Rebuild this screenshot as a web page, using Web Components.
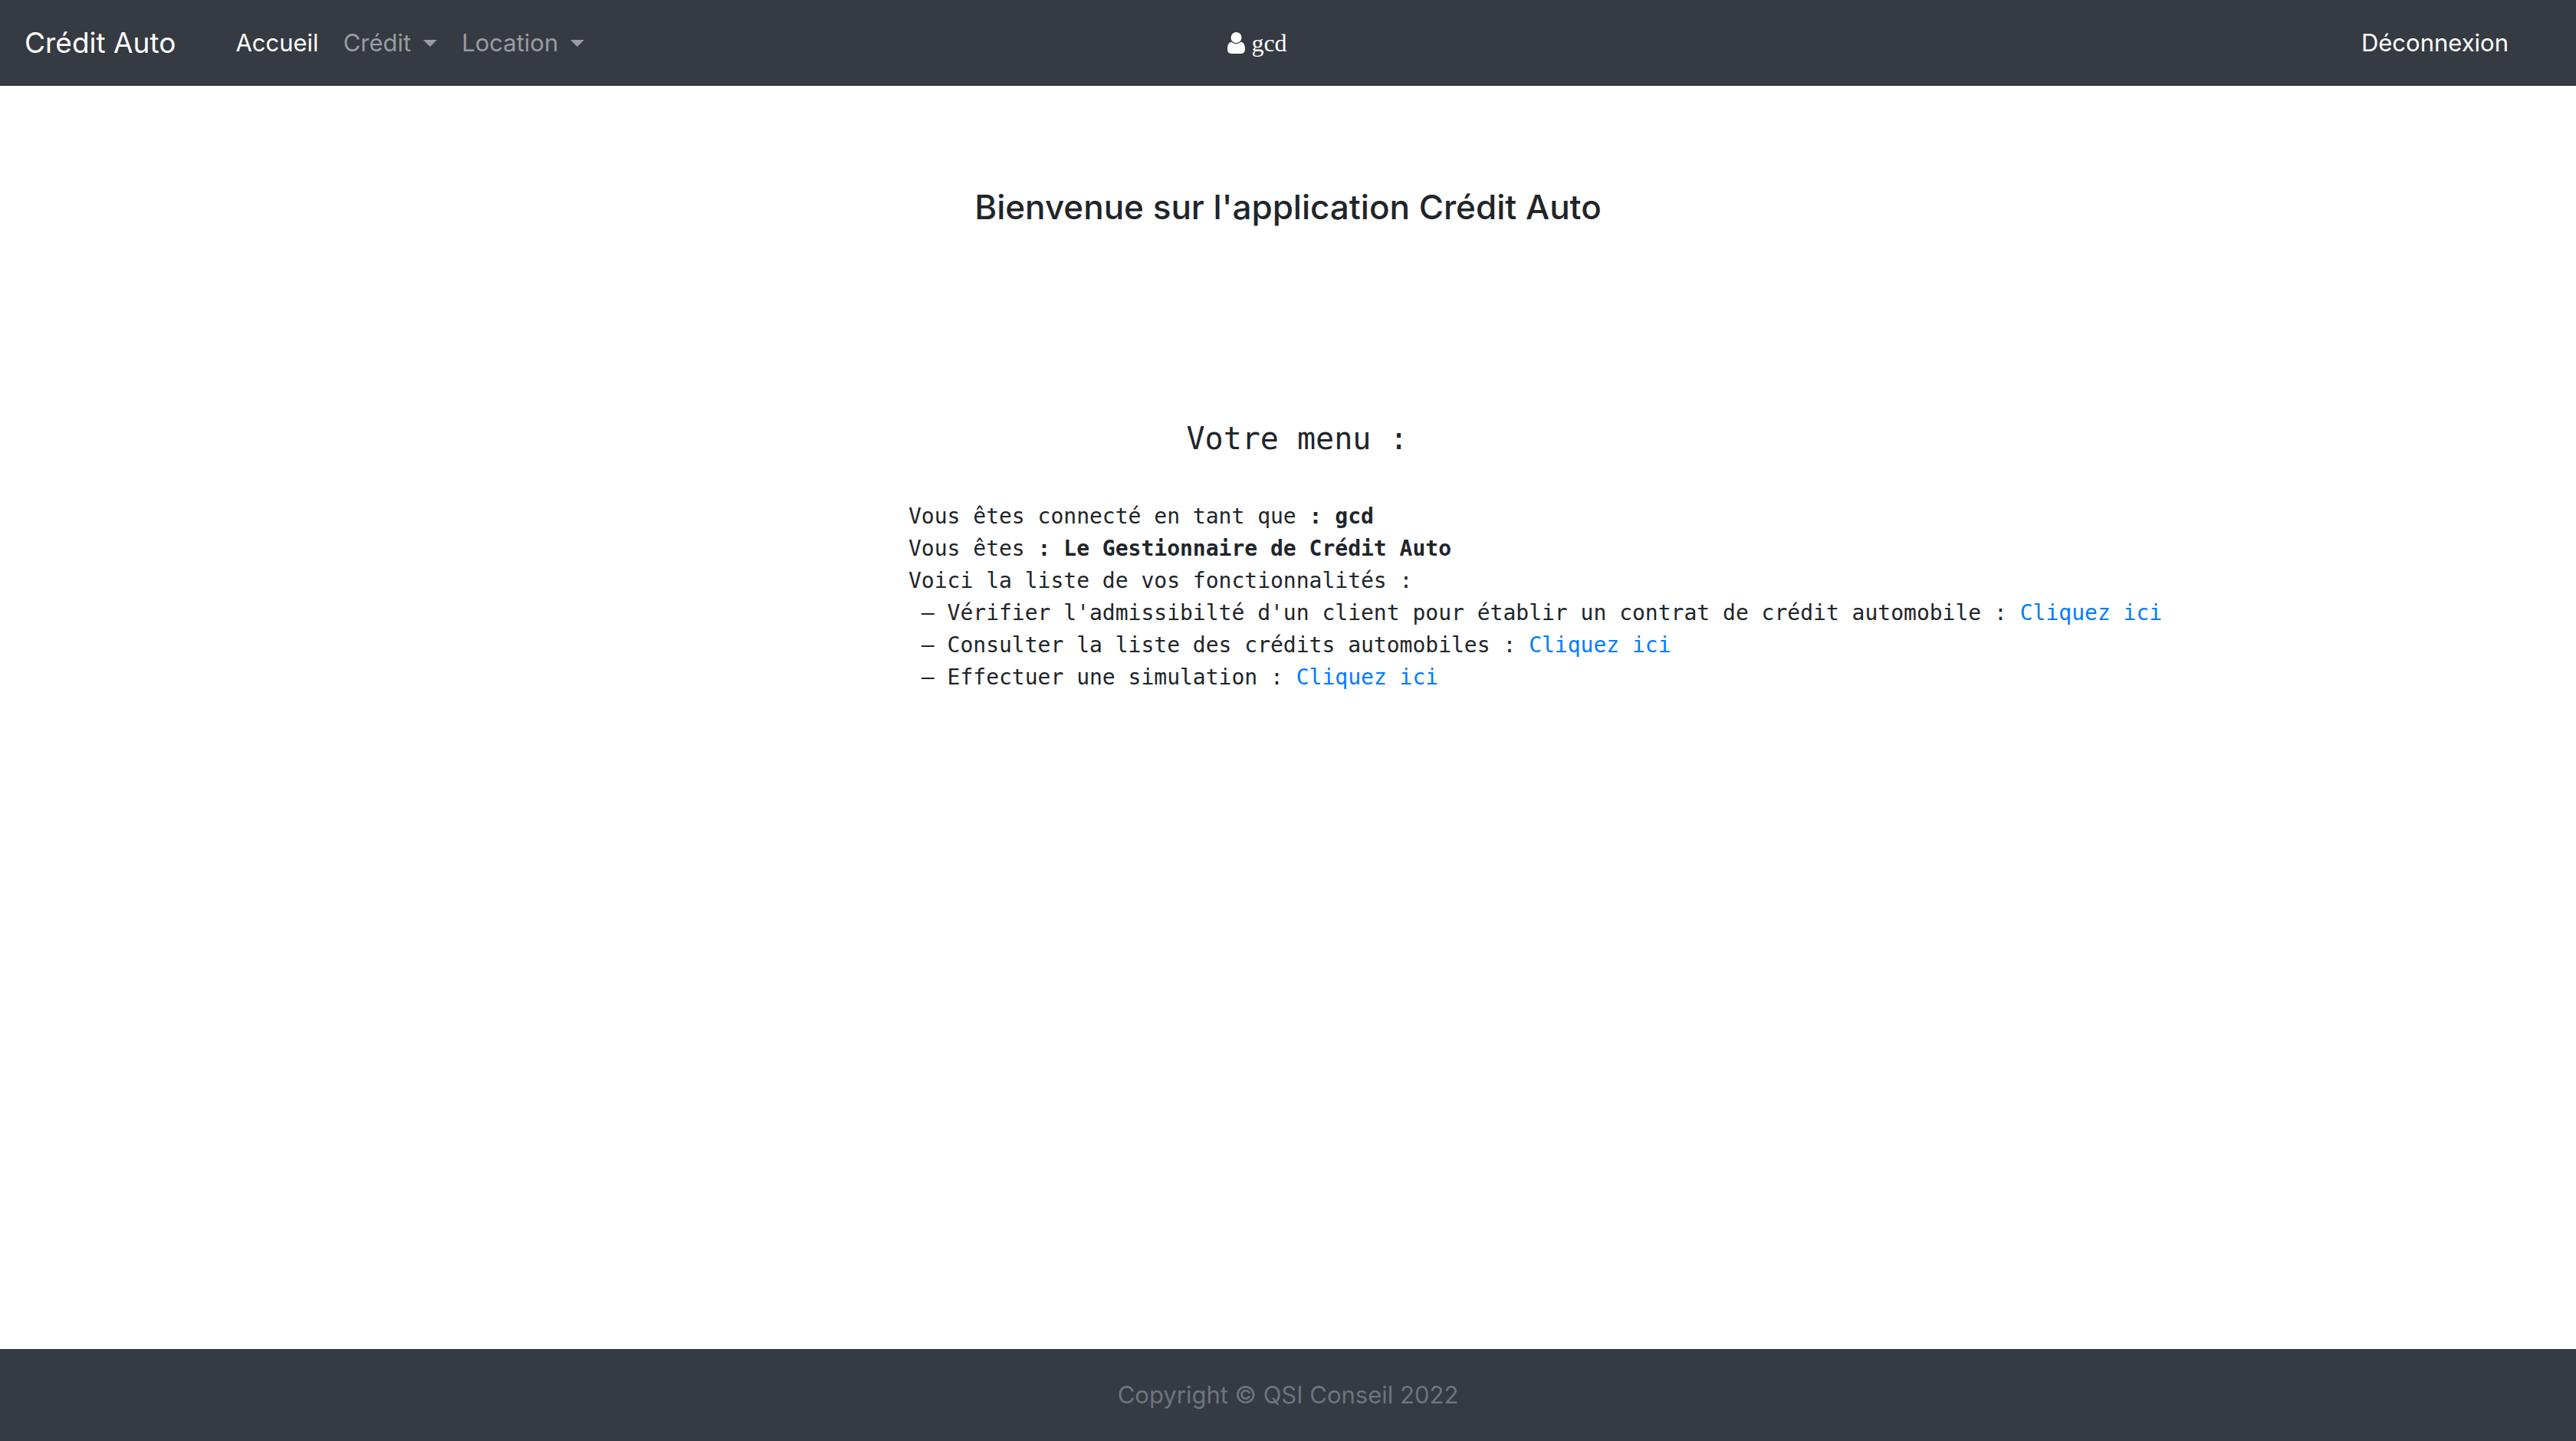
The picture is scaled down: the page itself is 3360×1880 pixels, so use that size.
<!DOCTYPE html>
<html lang="fr">
<head>
<meta charset="utf-8">
<title>Crédit Auto</title>
<style>
body { margin: 0; background: #fff; color: #212529; font: 31px/48px Inter, "Liberation Sans", sans-serif; }
</style>
</head>
<body>
<ca-app></ca-app>

<template id="t-app">
<style>
:host { display: flex; flex-direction: column; min-height: 100vh; }
main { flex: 1; }
</style>
<ca-navbar user="gcd">
  <ca-nav-link active href="#accueil">Accueil</ca-nav-link>
  <ca-dropdown>Crédit</ca-dropdown>
  <ca-dropdown>Location</ca-dropdown>
</ca-navbar>
<main>
  <ca-title>Bienvenue sur l'application Crédit Auto</ca-title>
  <ca-menu heading=" Votre menu :">
    <ca-line>Vous êtes connecté en tant que <b>: gcd</b></ca-line>
    <ca-line>Vous êtes <b>: Le Gestionnaire de Crédit Auto</b></ca-line>
    <ca-line>Voici la liste de vos fonctionnalités :</ca-line>
    <ca-line href="#admissibilite"> – Vérifier l'admissibilté d'un client pour établir un contrat de crédit automobile : </ca-line>
    <ca-line href="#credits"> – Consulter la liste des crédits automobiles : </ca-line>
    <ca-line href="#simulation"> – Effectuer une simulation : </ca-line>
  </ca-menu>
</main>
<ca-footer>Copyright © QSI Conseil 2022</ca-footer>
</template>

<template id="t-navbar">
<style>
:host { display: block; background: #363a42; color: #fff; }
nav { display: grid; grid-template-columns: 1fr auto 1fr; align-items: center; min-height: 112px; padding: 0 72px 0 32px; }
.left { display: flex; align-items: center; gap: 62px; }
.brand { font-size: 37px; line-height: 60px; color: #fff; text-decoration: none; }
.links { display: flex; }
.user { display: flex; align-items: center; gap: 8px; padding-right: 40px; font: 32px/48px "Liberation Serif", serif; }
svg { display: block; width: 23px; height: 28px; }
.right { justify-self: end; margin-right: 0; }
</style>
<nav>
  <div class="left">
    <a class="brand" href="#accueil">Crédit Auto</a>
    <div class="links"><slot></slot></div>
  </div>
  <div class="user">
    <svg viewBox="0 0 23 28" fill="#fff" aria-hidden="true"><circle cx="11.5" cy="7" r="7"/><path d="M5.5 12.8C1.5 13.2 0 16.8 0 22.3 0 25.7 2 28 5 28H18C21 28 23 25.7 23 22.3 23 16.8 21.5 13.2 17.5 12.8 14 15.9 9 15.9 5.5 12.8Z"/></svg>
    <span id="user"></span>
  </div>
  <ca-nav-link class="right" active href="#deconnexion">Déconnexion</ca-nav-link>
</nav>
</template>

<template id="t-link">
<style>
:host { display: block; }
a { display: block; padding: 16px; color: #9a9ca0; text-decoration: none; }
:host([active]) a { color: #fff; }
</style>
<a><slot></slot></a>
</template>

<template id="t-dropdown">
<style>
:host { display: block; }
button { display: flex; align-items: center; gap: 16px; margin: 0; padding: 16px; border: 0; background: none; color: #9a9ca0; font: inherit; }
i { border: 9px solid transparent; border-top-color: currentColor; border-bottom: 0; }
</style>
<button type="button" aria-haspopup="true"><slot></slot><i></i></button>
</template>

<template id="t-title">
<style>
:host { display: block; padding-top: 129px; text-align: center; }
h1 { margin: 0; font-size: 44px; line-height: 58px; font-weight: 500; }
</style>
<h1><slot></slot></h1>
</template>

<template id="t-menu">
<style>
:host { display: block; padding-top: 249px; font-family: "DejaVu Sans Mono", "Liberation Mono", monospace; }
h2 { margin: 0 0 57px; font-size: 40px; line-height: 48px; font-weight: 400; text-align: center; white-space: pre; }
.list { margin-left: calc(35% + 9px); font-size: 28px; line-height: 42px; }
</style>
<h2></h2>
<div class="list"><slot></slot></div>
</template>

<template id="t-line">
<style>
:host { display: block; white-space: pre; }
div { display: block; }
.row { white-space: pre; }
:host { white-space: normal; }
::slotted(b) { font-weight: 700; }
a { color: #007bff; text-decoration: none; }
</style>
<div class="row"><slot></slot></div>
</template>

<template id="t-footer">
<style>
:host { display: block; }
footer { padding: 36px 32px; background: #363a42; color: #6c757d; text-align: center; }
</style>
<footer><slot></slot></footer>
</template>

<script>
class Base extends HTMLElement {
  constructor() {
    super();
    this.attachShadow({ mode: 'open' }).append(
      document.getElementById(this.constructor.template).content.cloneNode(true));
  }
  $(selector) { return this.shadowRoot.querySelector(selector); }
}
class CaNavLink extends Base {
  static template = 't-link';
  connectedCallback() { this.$('a').href = this.getAttribute('href'); }
}
class CaDropdown extends Base { static template = 't-dropdown'; }
class CaNavbar extends Base {
  static template = 't-navbar';
  connectedCallback() { this.$('#user').textContent = this.getAttribute('user'); }
}
class CaTitle extends Base { static template = 't-title'; }
class CaLine extends Base {
  static template = 't-line';
  connectedCallback() {
    if (!this.hasAttribute('href') || this.$('a')) return;
    const a = document.createElement('a');
    a.href = this.getAttribute('href');
    a.textContent = 'Cliquez ici';
    this.$('.row').append(a);
  }
}
class CaMenu extends Base {
  static template = 't-menu';
  connectedCallback() { this.$('h2').textContent = this.getAttribute('heading'); }
}
class CaFooter extends Base { static template = 't-footer'; }
class CaApp extends Base { static template = 't-app'; }
customElements.define('ca-nav-link', CaNavLink);
customElements.define('ca-dropdown', CaDropdown);
customElements.define('ca-navbar', CaNavbar);
customElements.define('ca-title', CaTitle);
customElements.define('ca-line', CaLine);
customElements.define('ca-menu', CaMenu);
customElements.define('ca-footer', CaFooter);
customElements.define('ca-app', CaApp);
</script>
</body>
</html>
